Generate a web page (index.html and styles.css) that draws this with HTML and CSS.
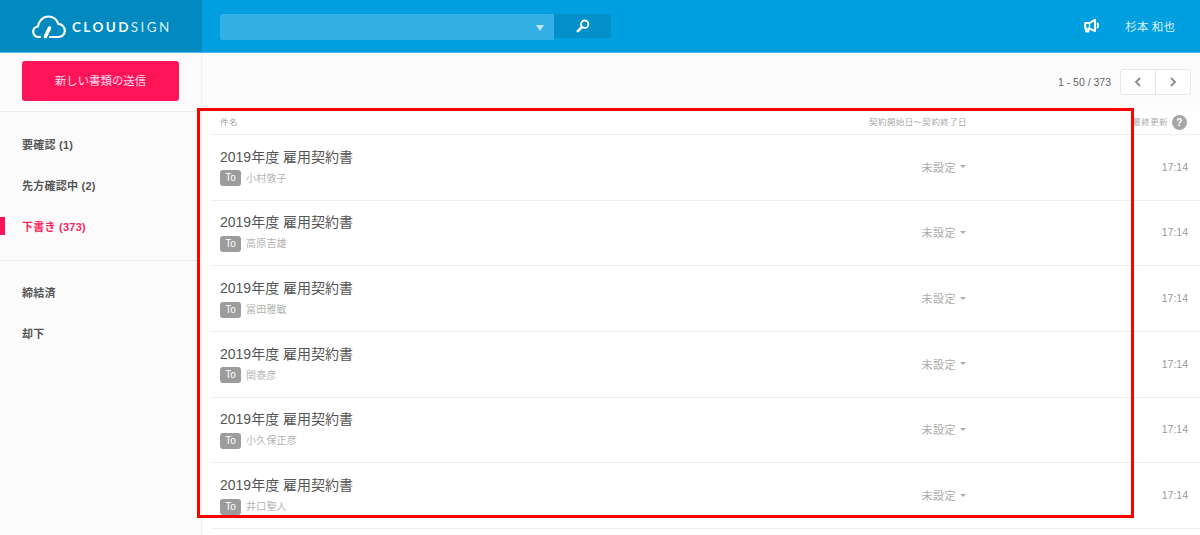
FILE: index.html
```html
<!DOCTYPE html>
<html lang="ja">
<head>
<meta charset="utf-8">
<title>CloudSign</title>
<link rel="stylesheet" href="styles.css">
</head>
<body>
<header class="topbar">
  <div class="brand">
    <svg class="brand-icon" viewBox="0 0 34 24" width="34" height="24" fill="none" stroke="#fff">
      <path d="M8 22H6.5C3.5 22 1.2 19.6 1.2 16.8C1.2 14 3.2 11.9 5.8 11.5C6.6 6 11 1.5 16.5 1.5C21.2 1.5 25 4.6 26.3 8.8C29.9 9.2 32.8 12.2 32.8 15.8C32.8 19.3 30 22 26.5 22H18" stroke-width="2.2" stroke-linecap="round"/>
      <path d="M13.5 21.5L17.5 13" stroke-width="3.6" stroke-linecap="round"/>
    </svg>
    <span class="brand-name"><b>CLOUD</b>SIGN</span>
  </div>
  <div class="search">
    <div class="search-input"><span class="search-caret"></span></div>
    <button class="search-btn" type="button" aria-label="検索">
      <svg viewBox="0 0 14 14" width="14" height="14" fill="none" stroke="#fff">
        <circle cx="8.7" cy="5.2" r="3.7" stroke-width="1.8"/>
        <path d="M6 8L1.8 12.2" stroke-width="2.6" stroke-linecap="round"/>
      </svg>
    </button>
  </div>
  <div class="topbar-right">
    <svg class="megaphone" viewBox="0 0 16 16" width="16" height="16" fill="none" stroke="#fff" stroke-width="2" stroke-linejoin="round">
      <path d="M1.2 5H5.5L11 1.8V13L5.5 10.6H4.4V13.6H2.2V10.6H1.2Z"/>
      <path d="M5.5 5V10.6" stroke-width="1.2"/>
      <path d="M12.8 5.2C14.6 5.8 14.6 9.2 12.8 9.8" stroke-width="1.8"/>
    </svg>
    <span class="user-name">杉本 和也</span>
  </div>
</header>
<div class="layout">
  <aside class="sidebar">
    <div class="compose">
      <button class="compose-btn" type="button">新しい書類の送信</button>
    </div>
    <nav class="nav nav-primary">
      <a class="nav-item">要確認 (1)</a>
      <a class="nav-item">先方確認中 (2)</a>
      <a class="nav-item nav-item-active">下書き (373)</a>
    </nav>
    <nav class="nav">
      <a class="nav-item">締結済</a>
      <a class="nav-item">却下</a>
    </nav>
  </aside>
  <main class="main">
    <div class="toolbar">
      <span class="page-count">1 - 50 / 373</span>
      <div class="pager">
        <span class="pager-btn"><svg viewBox="0 0 8 12" width="8" height="12" fill="none" stroke="#8a8a8a" stroke-width="1.8"><path d="M6 2L2 6L6 10"/></svg></span>
        <span class="pager-btn pager-btn-next"><svg viewBox="0 0 8 12" width="8" height="12" fill="none" stroke="#8a8a8a" stroke-width="1.8"><path d="M2 2L6 6L2 10"/></svg></span>
      </div>
    </div>
    <section class="list">
      <div class="list-head">
        <span class="col-title head-label">件名</span>
        <span class="col-period head-label">契約開始日〜契約終了日</span>
        <span class="col-updated"><span class="head-label">最終更新</span><i class="help">?</i></span>
      </div>
      <article class="row">
        <div class="col-title"><div class="doc-title">2019年度 雇用契約書</div><div class="doc-to"><span class="to-badge">To</span><span class="to-name">小村敦子</span></div></div>
        <div class="col-period period-value">未設定<span class="mini-caret"></span></div>
        <div class="col-updated time">17:14</div>
      </article>
      <article class="row">
        <div class="col-title"><div class="doc-title">2019年度 雇用契約書</div><div class="doc-to"><span class="to-badge">To</span><span class="to-name">高原吉雄</span></div></div>
        <div class="col-period period-value">未設定<span class="mini-caret"></span></div>
        <div class="col-updated time">17:14</div>
      </article>
      <article class="row">
        <div class="col-title"><div class="doc-title">2019年度 雇用契約書</div><div class="doc-to"><span class="to-badge">To</span><span class="to-name">冨田雅敏</span></div></div>
        <div class="col-period period-value">未設定<span class="mini-caret"></span></div>
        <div class="col-updated time">17:14</div>
      </article>
      <article class="row">
        <div class="col-title"><div class="doc-title">2019年度 雇用契約書</div><div class="doc-to"><span class="to-badge">To</span><span class="to-name">関泰彦</span></div></div>
        <div class="col-period period-value">未設定<span class="mini-caret"></span></div>
        <div class="col-updated time">17:14</div>
      </article>
      <article class="row">
        <div class="col-title"><div class="doc-title">2019年度 雇用契約書</div><div class="doc-to"><span class="to-badge">To</span><span class="to-name">小久保正彦</span></div></div>
        <div class="col-period period-value">未設定<span class="mini-caret"></span></div>
        <div class="col-updated time">17:14</div>
      </article>
      <article class="row">
        <div class="col-title"><div class="doc-title">2019年度 雇用契約書</div><div class="doc-to"><span class="to-badge">To</span><span class="to-name">井口聖人</span></div></div>
        <div class="col-period period-value">未設定<span class="mini-caret"></span></div>
        <div class="col-updated time">17:14</div>
      </article>
    </section>
  </main>
</div>
<div class="highlight"></div>
</body>
</html>
```
FILE: styles.css
```css
* { box-sizing: border-box; }
html, body { height: 100%; }
body {
  margin: 0;
  height: 535px;
  overflow: hidden;
  background: #fff;
  font-family: "Liberation Sans", "Noto Sans CJK JP", sans-serif;
  color: #555;
}
.topbar {
  display: flex;
  align-items: stretch;
  height: 53px;
  background: #00a0e0;
  border-bottom: 1px solid #4db9e6;
}
.brand {
  display: flex;
  align-items: center;
  gap: 6px;
  width: 202px;
  padding: 1px 0 0 32px;
  background: #0289c0;
}
.brand-icon { flex: none; }
.brand-name {
  font-family: Lato, "Liberation Sans", sans-serif;
  font-size: 13.5px;
  letter-spacing: 2.4px;
  color: #d5edf7;
  font-weight: 400;
}
.brand-name b { font-weight: 700; color: #f4fbfe; }
.search {
  display: flex;
  align-items: flex-start;
  margin: 14px 0 0 18px;
}
.search-input {
  position: relative;
  width: 334px;
  height: 26px;
  background: #33b1e6;
  border-radius: 3px 0 0 3px;
}
.search-caret {
  position: absolute;
  right: 10px;
  top: 11px;
  border-left: 4px solid transparent;
  border-right: 4px solid transparent;
  border-top: 6px solid #c4e8f7;
}
.search-btn {
  display: flex;
  align-items: center;
  justify-content: center;
  width: 57px;
  height: 24px;
  padding: 0;
  border: 0;
  background: #038fc9;
  border-radius: 0 3px 3px 0;
}
.topbar-right {
  display: flex;
  align-items: center;
  margin-left: auto;
  padding: 0 25px 1px 0;
}
.megaphone { margin-right: 25px; }
.user-name { font-size: 11.5px; color: #d8f0fa; letter-spacing: .1px; }

.layout { display: flex; height: 482px; }
.sidebar {
  flex: none;
  width: 202px;
  background: #fbfbfb;
  border-right: 1px solid #f0f0f0;
}
.compose {
  height: 59px;
  padding: 8px 22px 0;
  border-bottom: 1px solid #ececec;
}
.compose-btn {
  display: block;
  width: 157px;
  height: 40px;
  padding: 0 0 3px;
  border: 0;
  border-radius: 3px;
  background: #ff1457;
  color: #fde;
  font: 11.4px "Liberation Sans", "Noto Sans CJK JP", sans-serif;
}
.nav { display: flex; flex-direction: column; padding-top: 10px; }
.nav-primary { height: 149px; padding-top: 11px; border-bottom: 1px solid #ececec; }
.nav-item {
  display: flex;
  align-items: center;
  height: 41px;
  padding-left: 22px;
  font-size: 11px;
  font-weight: 700;
  letter-spacing: .25px;
  color: #555;
}
.nav-item-active {
  color: #ff1f5f;
  background: linear-gradient(#ff1457, #ff1457) left center / 5px 18px no-repeat;
}
.main { flex: 1; min-width: 0; }
.toolbar {
  display: flex;
  align-items: center;
  justify-content: flex-end;
  height: 58px;
  padding: 0 9px 0 0;
  background: #fcfcfc;
}
.page-count { font-size: 10.5px; color: #666; margin-right: 9px; }
.pager {
  display: flex;
  width: 71px;
  height: 26px;
  background: #fff;
  border: 1px solid #e6e6e6;
  border-radius: 3px;
}
.pager-btn { flex: 1; display: flex; align-items: center; justify-content: center; }
.pager-btn-next { border-left: 1px solid #e6e6e6; }
.list { margin-left: 9px; }
.list-head, .row { display: flex; border-bottom: 1px solid #f0f0f0; }
.list-head {
  align-items: center;
  height: 24px;
  font-size: 8.5px;
  color: #aaa;
  letter-spacing: .4px;
}
.head-label { margin-bottom: 4px; }
.row { align-items: center; height: 65.65px; }
.col-title { flex: none; width: 648px; padding-left: 9px; }
.col-period { flex: none; width: 110px; text-align: right; }
.col-updated { flex: 1; display: flex; align-items: center; justify-content: flex-end; gap: 4px; padding-right: 13px; }
.list-head .col-period { width: 108px; margin-right: 14px; white-space: nowrap; }
.row .col-updated { padding: 0 12px 1px 0; }
.doc-title { font-size: 14px; line-height: 18px; color: #555; }
.doc-to { display: flex; align-items: center; gap: 5px; margin-top: 4px; font-size: 10px; color: #b4b4b4; letter-spacing: .2px; }
.to-name { margin-bottom: 2px; }
.to-badge {
  width: 21px;
  height: 16px;
  border-radius: 3px;
  background: #9c9c9c;
  color: #fff;
  font-size: 10px;
  line-height: 16px;
  text-align: center;
  letter-spacing: 0;
}
.period-value {
  display: flex;
  align-items: center;
  justify-content: flex-end;
  gap: 4px;
  font-size: 11px;
  letter-spacing: .5px;
  color: #aaa;
  padding: 0 3px 1px 0;
}
.mini-caret {
  border-left: 3px solid transparent;
  border-right: 3px solid transparent;
  border-top: 3px solid #aaa;
}
.time { font-size: 10.5px; color: #999; }
.help {
  width: 15px;
  height: 15px;
  border-radius: 50%;
  background: #a6a6a6;
  color: #fff;
  font: 700 10px/15px "Liberation Sans", sans-serif;
  text-align: center;
}
.highlight {
  position: absolute;
  left: 197px;
  top: 108px;
  width: 937px;
  height: 410px;
  border: 3px solid #f00;
}
```
